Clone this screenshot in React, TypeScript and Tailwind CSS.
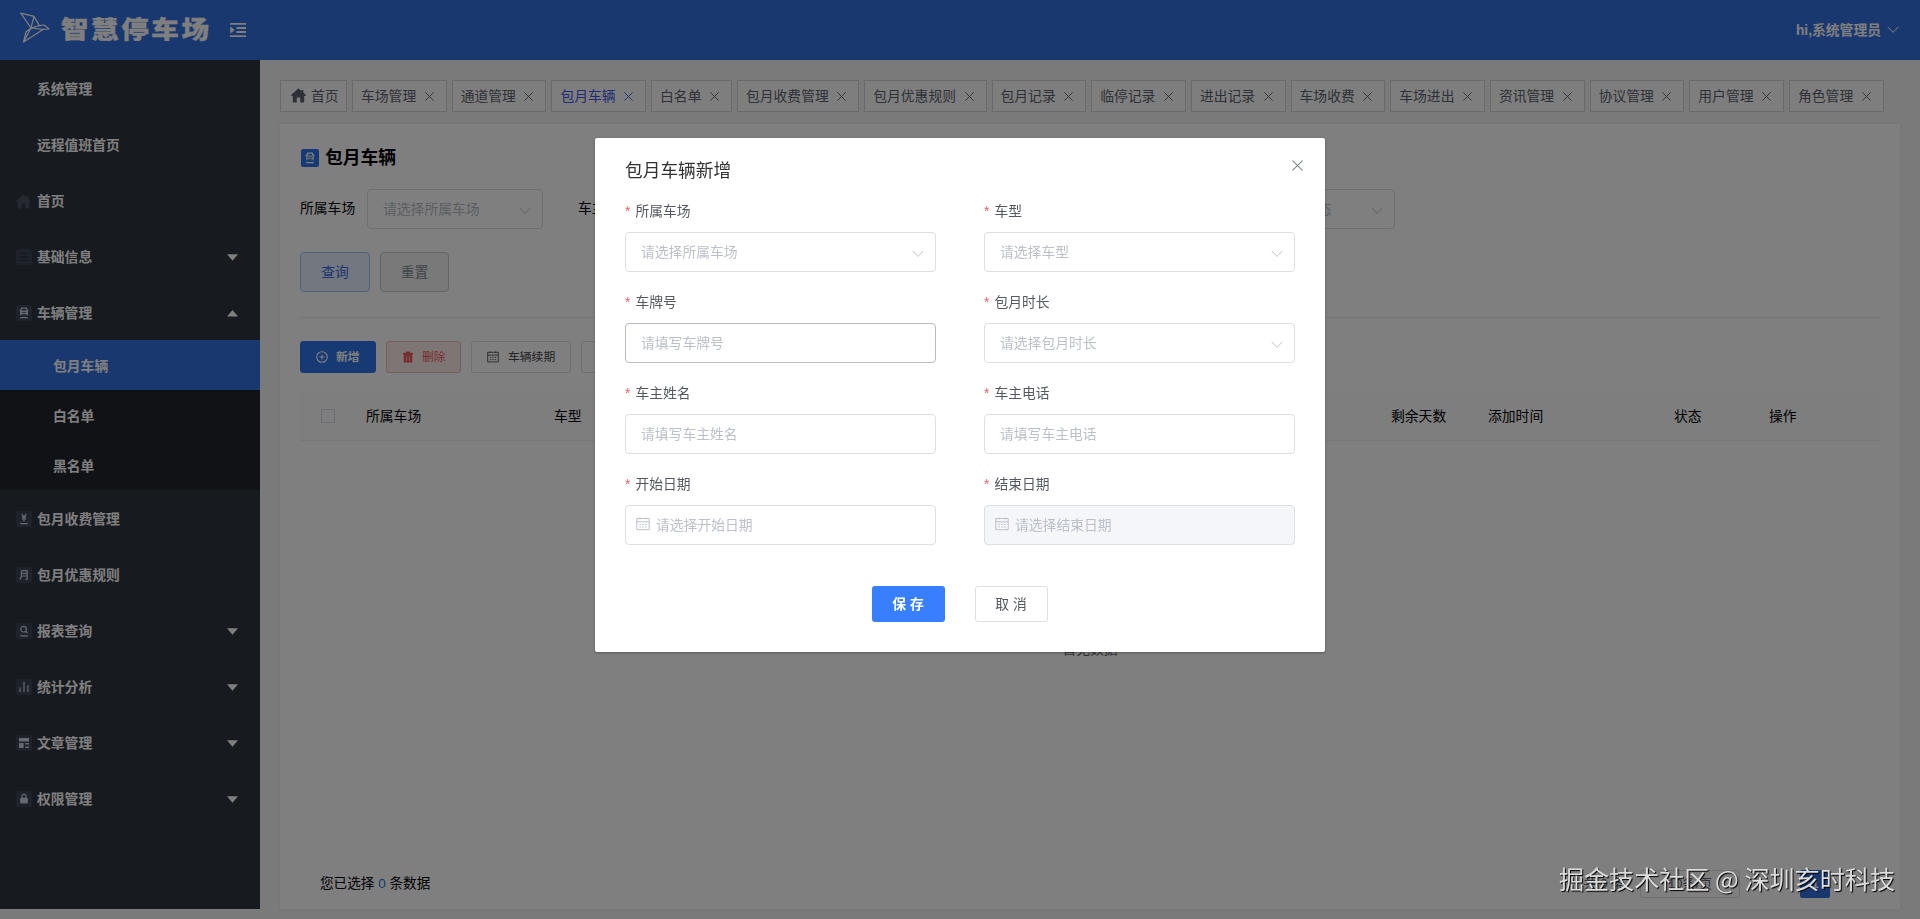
import React from "react";

interface MenuItem {
    label: string;
    icon?: React.ReactNode;
    arrow?: "down" | "up";
    children?: string[];
}

interface FormField {
    label: string;
    placeholder: string;
    type: "select" | "input" | "date";
    disabled?: boolean;
    hover?: boolean;
}

const ACTIVE = "包月车辆";

const CloseIcon = ({ className = "" }: { className?: string }) => (
    <svg viewBox="0 0 10 10" fill="none" stroke="currentColor" strokeLinecap="round" className={className}>
        <path d="M0.7 0.7 9.3 9.3M9.3 0.7 0.7 9.3" />
    </svg>
);

const ChevronIcon = ({ className = "" }: { className?: string }) => (
    <svg viewBox="0 0 12 8" fill="none" stroke="currentColor" strokeLinecap="round" className={className}>
        <path d="M1 1.2 6 6.4 11 1.2" />
    </svg>
);

const HomeIcon = ({ className = "" }: { className?: string }) => (
    <svg viewBox="0 0 15 15" fill="currentColor" className={className}>
        <path d="M7.5 0.3 10.4 2.9V2h1.9v2.6L14.8 7v1.1H13.2v5.6q0 .7-.7.7H9.2V9.9q0-.5-.5-.5H6.3q-.5 0-.5.5v4.5H2.5q-.7 0-.7-.7V8.1H.2V7z" />
    </svg>
);

const CalendarIcon = ({ className = "" }: { className?: string }) => (
    <svg viewBox="0 0 14 14" fill="none" stroke="currentColor" className={className}>
        <path d="M.8 1.5h12.4v11.2H.8zM.8 4.8h12.4M4 .4v2M10 .4v2" />
        <path d="M3.4 7.5h1.6M6.2 7.5h1.6M9 7.5h1.6M3.4 10h1.6M6.2 10h1.6M9 10h1.6" />
    </svg>
);

// 菜单图标统一的圆角底
const IconBox = ({ children }: { children: React.ReactNode }) => (
    <svg viewBox="0 0 16 16" className="w-4 h-4" fill="none" stroke="#ccd3e2" strokeWidth="1.2">
        <rect width="16" height="16" rx="2.5" fill="#3c4454" stroke="none" />
        {children}
    </svg>
);

const CarGlyph = () => (
    <>
        <path d="M4.9 5.2 5.7 3.2h4.6l.8 2M3.6 5l1.6 1M12.4 5l-1.6 1" />
        <path d="M5 5.4h6l.9 1.2v3.6h-1.5v-.9H5.6v.9H4.1V6.6zM6 7v.8h4V7z" fill="#ccd3e2" fillRule="evenodd" stroke="none" />
        <path d="M4.2 12.6h7.6" />
    </>
);

const menus: MenuItem[] = [
    { label: "系统管理" },
    { label: "远程值班首页" },
    { label: "首页", icon: <HomeIcon className="w-[15px] h-[15px] text-[#4b5364]" /> },
    {
        label: "基础信息",
        icon: (
            <IconBox>
                <path d="M3.5 4.5h6M3.5 8h9M3.5 11.5h9" stroke="#262c38" />
            </IconBox>
        ),
        arrow: "down",
    },
    {
        label: "车辆管理",
        icon: (
            <IconBox>
                <CarGlyph />
            </IconBox>
        ),
        arrow: "up",
        children: ["包月车辆", "白名单", "黑名单"],
    },
    {
        label: "包月收费管理",
        icon: (
            <IconBox>
                <path d="M5.8 3.2 8 5.8l2.2-2.6M5.8 6.2h4.4M5.8 8h4.4M8 5.8v4.4M4.2 12.6h7.6" />
            </IconBox>
        ),
    },
    {
        label: "包月优惠规则",
        icon: (
            <IconBox>
                <path d="M5.4 3.6h5.8v8.2q0 .8-1.6.6M5.4 3.6v4.6q0 2.6-1.4 4.2M5.4 6.3h5.8M5.4 9h5.8" />
            </IconBox>
        ),
    },
    {
        label: "报表查询",
        icon: (
            <IconBox>
                <circle cx="7.6" cy="6.2" r="2.8" />
                <path d="m9.7 8.3 1.8 1.9M4.2 12.8h7.6" />
            </IconBox>
        ),
        arrow: "down",
    },
    {
        label: "统计分析",
        icon: (
            <IconBox>
                <path d="M4 8.5v4.5M8 3v10M12 6.3V13" />
            </IconBox>
        ),
        arrow: "down",
    },
    {
        label: "文章管理",
        icon: (
            <IconBox>
                <path d="M3 3h10v3.4H3zM3 8h4.6v5H3zM9.2 8H13v1.6H9.2zM9.2 11.4H13V13H9.2z" fill="#ccd3e2" stroke="none" />
            </IconBox>
        ),
        arrow: "down",
    },
    {
        label: "权限管理",
        icon: (
            <IconBox>
                <path d="M4.2 6.8h7.6v5.6H4.2z" fill="#ccd3e2" stroke="none" />
                <path d="M6 7V5.4a2 2 0 0 1 4 0V7" />
            </IconBox>
        ),
        arrow: "down",
    },
];

const tabs = [
    "车场管理", "通道管理", "包月车辆", "白名单", "包月收费管理", "包月优惠规则", "包月记录", "临停记录",
    "进出记录", "车场收费", "车场进出", "资讯管理", "协议管理", "用户管理", "角色管理",
];

const columns = [
    { label: "所属车场", width: "w-[188px]" },
    { label: "车型", width: "w-[837px]" },
    { label: "剩余天数", width: "w-[97px]" },
    { label: "添加时间", width: "w-[186px]" },
    { label: "状态", width: "w-[95px]" },
    { label: "操作", width: "w-[100px]" },
];

const fields: FormField[] = [
    { label: "所属车场", placeholder: "请选择所属车场", type: "select" },
    { label: "车型", placeholder: "请选择车型", type: "select" },
    { label: "车牌号", placeholder: "请填写车牌号", type: "input", hover: true },
    { label: "包月时长", placeholder: "请选择包月时长", type: "select" },
    { label: "车主姓名", placeholder: "请填写车主姓名", type: "input" },
    { label: "车主电话", placeholder: "请填写车主电话", type: "input" },
    { label: "开始日期", placeholder: "请选择开始日期", type: "date" },
    { label: "结束日期", placeholder: "请选择结束日期", type: "date", disabled: true },
];

function Header() {
    return (
        <header className="h-[60px] bg-[#3471e0] flex items-center text-white shrink-0">
            <svg viewBox="0 0 30 32" className="w-[30px] h-8 ml-5 -mt-1" fill="none" stroke="white" strokeWidth="1.2" strokeLinejoin="round">
                <path d="M.8 1.2 14 4.4l5.4 9.2L11 16z" />
                <path d="M19.4 13.6 24 13l5 4-6 .4L3.6 30 11 16l12 1.4M11 16l3-11.6" />
                <path d="m11 16-5 4L3.6 30" />
            </svg>
            <h1 className="ml-[11px] text-[27.5px] leading-none font-black tracking-[2.6px] scale-y-[0.86] [-webkit-text-stroke:0.4px_white]">
                智慧停车场
            </h1>
            <svg viewBox="0 0 16 14" className="w-4 h-[14px] ml-[18px]" fill="none" stroke="white" strokeWidth="1.8">
                <path d="M0 .9h16M6.5 5h9.5M6.5 9h9.5M0 13.1h16" />
                <path d="M.2 3.4v7.2L4.8 7z" fill="white" stroke="none" />
            </svg>
            <div className="ml-auto mr-[21px] flex items-center text-[13.8px] font-bold">
                <span className="pt-[2px]">hi,系统管理员</span>
                <ChevronIcon className="w-3 h-2 ml-[6px]" />
            </div>
        </header>
    );
}

function Sidebar() {
    return (
        <aside className="w-[260px] h-[849px] bg-[#2e343c] text-white text-[13.8px] font-bold shrink-0">
            {menus.map((menu) => (
                <div key={menu.label}>
                    <div className="h-14 flex items-center pl-4 pr-[22px]">
                        <span className="w-4 mr-[5px] pt-[2px]">{menu.icon}</span>
                        <span className="pt-1">{menu.label}</span>
                        {menu.arrow && (
                            <svg viewBox="0 0 11 7" className="w-[11px] h-[7px] ml-auto mt-[2px]" fill="white">
                                <path d={menu.arrow === "down" ? "M0 .3h11L5.5 6.8z" : "M0 6.4h11L5.5 0z"} />
                            </svg>
                        )}
                    </div>
                    {menu.children && (
                        <div className="bg-[#20252c]">
                            {menu.children.map((child) => (
                                <div
                                    key={child}
                                    className={`h-[50px] flex items-center pl-[53px] pt-1 ${child === ACTIVE ? "bg-[#3471e0]" : ""}`}
                                >
                                    {child}
                                </div>
                            ))}
                        </div>
                    )}
                </div>
            ))}
        </aside>
    );
}

function TabBar() {
    const tabClass = "h-8 shrink-0 flex items-center border border-[#d0d4dc] bg-[#fcfcfc]";
    return (
        <nav className="flex gap-[5px] text-[13.8px] text-[#5c636e] whitespace-nowrap">
            <div className={`${tabClass} w-[67px] pl-[10px]`}>
                <HomeIcon className="w-[15px] h-[15px] mr-[5px] -mt-[2px] shrink-0" />
                <span className="pt-[2px]">首页</span>
            </div>
            {tabs.map((tab) => (
                <div key={tab} className={`${tabClass} pl-2 pr-[15px] ${tab === ACTIVE ? "text-[#4358e6]" : ""}`}>
                    <span className="pt-[2px]">{tab}</span>
                    <CloseIcon className="w-[9px] h-[9px] ml-[8.5px] mr-[-3px]" />
                </div>
            ))}
        </nav>
    );
}

function FilterItem({ label, placeholder, select = false }: { label: string; placeholder: string; select?: boolean }) {
    return (
        <div className="flex items-center">
            <span className="w-[67px] text-black">{label}</span>
            <div className="w-[176px] h-10 rounded border border-[#dcdfe6] flex items-center justify-between pl-[15px] pr-[11px] text-[#b8bcc6]">
                <span className="pt-[2px]">{placeholder}</span>
                {select && <ChevronIcon className="w-3 h-2 mt-[3px]" />}
            </div>
        </div>
    );
}

function VehiclePage() {
    const btn = "h-8 rounded-[3px] border flex items-center text-[11.8px] pl-[15px]";
    return (
        <section className="mt-3 h-[785px] bg-white px-5 pt-6 flex flex-col shadow-[0_0_4px_rgba(0,0,0,0.06)]">
            <h2 className="h-[20px] flex items-center text-[17.8px] font-bold text-black">
                <svg viewBox="0 0 18 18" className="w-[18px] h-[18px] ml-px mr-[6px]" fill="none" stroke="white" strokeWidth="1.3">
                    <rect width="18" height="18" rx="2" fill="#2f74e8" stroke="none" />
                    <g transform="translate(1 1)">
                        <CarGlyph />
                    </g>
                </svg>
                包月车辆
            </h2>

            <div className="mt-[21px] flex gap-[35px] text-[13.8px] whitespace-nowrap">
                <FilterItem label="所属车场" placeholder="请选择所属车场" select />
                <FilterItem label="车主姓名" placeholder="请填写车主姓名" />
                <FilterItem label="车牌号" placeholder="请填写车牌号" />
                <div className="ml-[18px]">
                    <FilterItem label="包月状态" placeholder="请选择包月状态" select />
                </div>
            </div>

            <div className="mt-[23px] flex gap-[10px] text-[13.8px]">
                <button className="w-[70px] h-10 pt-[2px] rounded border border-[#a9c2f5] bg-[#e6effe] text-[#3c6be0]">查询</button>
                <button className="w-[69px] h-10 pt-[2px] rounded border border-[#c8cacf] bg-[#f2f2f3] text-[#85888f]">重置</button>
            </div>

            <div className="mt-[25px] h-px bg-[#eceef3]" />

            <div className="mt-[23px] flex gap-[10px]">
                <button className={`${btn} w-[76px] border-[#2f74e8] bg-[#2f74e8] text-white font-bold`}>
                    <svg viewBox="0 0 12 12" className="w-3 h-3 mr-2" fill="none" stroke="currentColor" strokeWidth="1.1">
                        <circle cx="6" cy="6" r="5.3" />
                        <path d="M3.4 6h5.2M6 3.4v5.2" />
                    </svg>
                    <span className="pt-[2px]">新增</span>
                </button>
                <button className={`${btn} w-[75px] border-[#f3bcbc] bg-[#fdebeb] text-[#ee5a5a]`}>
                    <svg viewBox="0 0 12 12" className="w-3 h-3 mr-2" fill="currentColor">
                        <path d="M4 .4h4v1.3h3v1.9H1V1.7h3zM1.7 3.6h8.6v7.8H1.7z" />
                        <path d="M4.6 5.2v4.6M7.4 5.2v4.6" stroke="#fdebeb" strokeWidth="0.6" />
                    </svg>
                    <span className="pt-[2px]">删除</span>
                </button>
                <button className={`${btn} w-[100px] border-[#dcdfe6] text-[#44474d]`}>
                    <CalendarIcon className="w-3 h-3 mr-[9px]" />
                    <span className="pt-[2px]">车辆续期</span>
                </button>
                <button className={`${btn} w-[76px] border-[#dcdfe6] text-[#44474d]`}>导出</button>
            </div>

            <div className="mt-[18px] h-[50px] shrink-0 bg-[#fcfcfc] border-b border-[#f0f1f5] flex items-center text-[13.8px] text-black">
                <span className="w-[14px] h-[14px] ml-[21px] mr-[31px] rounded-[2px] border border-[#d4dbe4]" />
                {columns.map((col) => (
                    <span key={col.label} className={`${col.width} pt-[3px]`}>{col.label}</span>
                ))}
            </div>

            <div className="flex-1 flex justify-center pt-[199px] text-[13.8px] leading-5 text-[#606266]">暂无数据</div>

            <footer className="h-8 mb-[9px] flex items-center text-[13.6px] text-black pl-5">
                您已选择&nbsp;<span className="text-[#3471e0]">0</span>&nbsp;条数据
                <div className="ml-auto mr-9 flex items-center text-[13px] text-[#606266]">
                    <span className="mr-4">共 0 条</span>
                    <span className="w-[100px] h-7 rounded-[3px] border border-[#dcdfe6] flex items-center justify-center">10条/页</span>
                    <span className="w-[60px]" />
                    <span className="w-[30px] h-7 rounded-[2px] bg-[#3471e0] text-white font-bold flex items-center justify-center">1</span>
                    <span className="w-[14px]" />
                </div>
            </footer>
        </section>
    );
}

function FieldControl({ field }: { field: FormField }) {
    return (
        <div
            className={`h-10 rounded border flex items-center text-[#bcc0c8] ${
                field.hover ? "border-[#b8bbc2]" : "border-[#dcdfe3]"
            } ${field.disabled ? "bg-[#f4f6fa]" : "bg-white"} ${field.type === "date" ? "pl-[10px]" : "pl-[15px]"}`}
        >
            {field.type === "date" && <CalendarIcon className="w-[14px] h-[14px] mr-[6px] -mt-[2px]" />}
            <span className="pt-[2px]">{field.placeholder}</span>
            {field.type === "select" && <ChevronIcon className="w-3 h-2 ml-auto mr-[11px] mt-[3px]" />}
        </div>
    );
}

function AddDialog() {
    return (
        <div className="w-[730px] h-[514px] mt-[138px] rounded-[2px] bg-white px-[30px] shadow-[0_1px_3px_rgba(0,0,0,0.3)]">
            <div className="h-[61px] pt-[5px] flex items-center justify-between text-[17.7px] text-[#303133]">
                包月车辆新增
                <CloseIcon className="w-[11px] h-[11px] mr-[-8px] mt-[-11px] text-[#84878d]" />
            </div>
            <div className="grid grid-cols-2 gap-x-12 gap-y-[18px] text-[13.8px]">
                {fields.map((field) => (
                    <div key={field.label} className="h-[73px] flex flex-col justify-between">
                        <label className="leading-[26px] text-[#55585e]">
                            <span className="text-[#e8606c] mr-[5px]">*</span>
                            {field.label}
                        </label>
                        <FieldControl field={field} />
                    </div>
                ))}
            </div>
            <div className="mt-[41px] flex justify-center gap-[30px] text-[13.8px] pr-px">
                <button className="w-[73px] h-9 pt-[3px] rounded-[3px] bg-[#387fff] text-white font-bold">保 存</button>
                <button className="w-[73px] h-9 pt-[3px] rounded-[3px] border border-[#dcdfe3] text-[#55585e]">取 消</button>
            </div>
        </div>
    );
}

export default function App() {
    return (
        <div className="w-[1920px] h-[919px] overflow-hidden bg-[#f4f4f4] [font-family:'Liberation_Sans','Noto_Sans_CJK_SC',sans-serif]">
            <Header />
            <div className="flex">
                <Sidebar />
                <main className="flex-1 min-w-0 px-5 pt-5">
                    <TabBar />
                    <VehiclePage />
                </main>
            </div>

            {/* 遮罩与弹窗 */}
            <div className="fixed inset-0 bg-black/50 flex justify-center items-start">
                <AddDialog />
            </div>

            {/* 右下角水印 */}
            <div className="fixed right-[25px] bottom-[22px] text-[25.1px] leading-[38px] text-[#dcdcdc] whitespace-nowrap [font-family:'Noto_Sans_CJK_SC',sans-serif] [text-shadow:1px_1px_1px_#000]">
                掘金技术社区 @ 深圳亥时科技
            </div>
        </div>
    );
}
